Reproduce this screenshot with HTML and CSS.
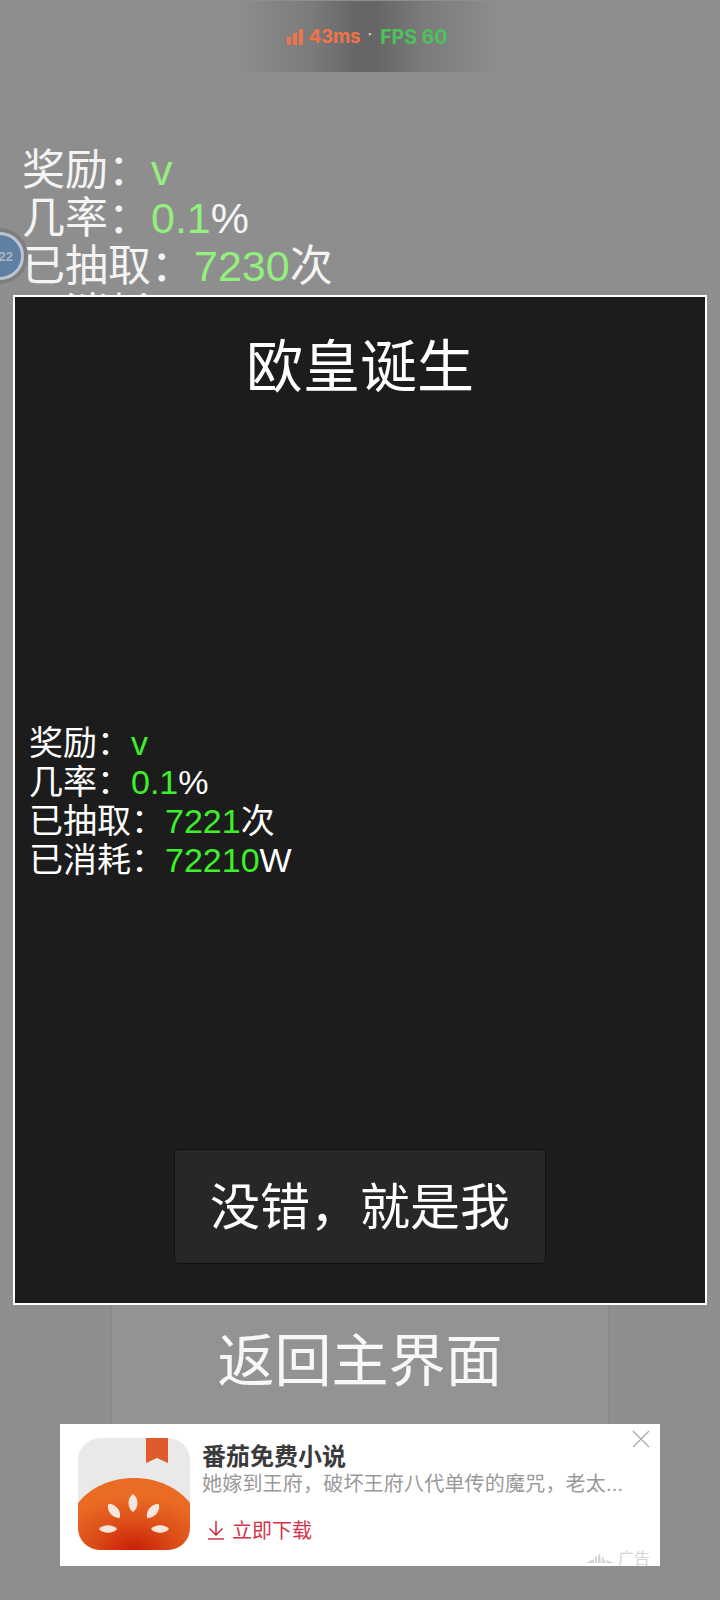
FILE: index.html
```html
<!DOCTYPE html>
<html lang="zh-CN">
<head>
    <meta charset="UTF-8">
    <meta name="viewport" content="width=device-width, initial-scale=1.0">
    <title>欧皇诞生</title>
    <link rel="stylesheet" href="styles.css">
</head>
<body>
    <div class="netBar">
        <svg class="netIcon" width="17" height="17" viewBox="0 0 17 17"><rect x="0" y="9" width="4" height="8"/><rect x="6" y="5" width="4" height="12"/><rect x="12" y="1" width="4" height="16"/></svg>
        <span class="ping">43ms</span>
        <span class="dot">·</span>
        <span class="fps">FPS 60</span>
    </div>

    <main class="page">
        <div class="stats stats-back">
            <div>奖励：<em>v</em></div>
            <div>几率：<em>0.1</em>%</div>
            <div>已抽取：<em>7230</em>次</div>
            <div>已消耗：<em>72300</em>W</div>
        </div>
        <div class="backBtn">返回主界面</div>
    </main>

    <div class="floatBall"><span>22</span></div>

    <section class="dialog">
        <h1>欧皇诞生</h1>
        <div class="stats stats-front">
            <div>奖励：<em>v</em></div>
            <div>几率：<em>0.1</em>%</div>
            <div>已抽取：<em>7221</em>次</div>
            <div>已消耗：<em>72210</em>W</div>
        </div>
        <button class="okBtn">没错，就是我</button>
    </section>

    <aside class="ad">
        <svg class="adIcon" width="112" height="112" viewBox="0 0 112 112">
            <defs>
                <radialGradient id="tomato" cx="50%" cy="100%" r="75%">
                    <stop offset="0" stop-color="#c91d08"/>
                    <stop offset="0.5" stop-color="#dc4c17"/>
                    <stop offset="1" stop-color="#ea6b24"/>
                </radialGradient>
                <path id="seed" d="M-9 0C-5 -6 5 -6 9 0C5 6 -5 6 -9 0Z"/>
                <path id="seedFlat" d="M-9 0C-5 -5 5 -5 9 0C5 5 -5 5 -9 0Z"/>
            </defs>
            <rect width="112" height="112" rx="22" fill="#e9e9e9"/>
            <path d="M0 65C12 50 32 40 56 40S100 50 112 65V90A22 22 0 0 1 90 112H22A22 22 0 0 1 0 90Z" fill="url(#tomato)"/>
            <path d="M68 0H90V25L79 20L68 25Z" fill="#e05a2d"/>
            <g fill="#f7e6dc">
                <use href="#seed" transform="translate(55 65) rotate(90)"/>
                <use href="#seed" transform="translate(36 73) rotate(50)"/>
                <use href="#seed" transform="translate(75 73) rotate(-50)"/>
                <use href="#seedFlat" transform="translate(30 91)"/>
                <use href="#seedFlat" transform="translate(82 91)"/>
            </g>
        </svg>
        <div class="adBody">
            <div class="adTitle">番茄免费小说</div>
            <div class="adDesc">她嫁到王府，破坏王府八代单传的魔咒，老太...</div>
            <div class="adLink">
                <svg width="18" height="20" viewBox="0 0 18 20" fill="none" stroke="#d2344a" stroke-width="1.6"><path d="M9 1V15M2.5 8.5L9 15L15.5 8.5M1 19H17"/></svg>
                <span>立即下载</span>
            </div>
        </div>
        <svg class="adClose" width="18" height="18" viewBox="0 0 18 18" stroke="#a9a9a9" stroke-width="1.2"><path d="M1 1L17 17M17 1L1 17"/></svg>
        <div class="adMark">
            <svg width="28" height="10" viewBox="0 0 28 10" fill="#d4d4d4"><path d="M0 9L8 5V9ZM9 9V3L11 2V9ZM12 9V1L14 0L15 9ZM16 9V2L20 9ZM20 6L28 9H21Z"/></svg>
            <span>广告</span>
        </div>
    </aside>
</body>
</html>
```

FILE: styles.css
```css
* {
    box-sizing: border-box;
}
body {
    margin: 0;
    width: 720px;
    height: 1600px;
    overflow: hidden;
    position: relative;
    background-color: #8e8e8e;
    color: #fff;
    font-family: "Liberation Sans", "Noto Sans CJK SC", sans-serif;
}
em {
    font-style: normal;
}
.page {
    display: flex;
    flex-direction: column;
    align-items: center;
    height: 1600px;
    padding: 146px 0 0;
}
.stats {
    align-self: flex-start;
}
.stats-back {
    margin-left: 22px;
    font-size: 43px;
    line-height: 48px;
    height: 1154px;
    color: #f4f4f4;
}
.stats-back em {
    color: #93f07f;
}
.backBtn {
    width: 498px;
    height: 130px;
    padding-top: 27px;
    background-color: #939393;
    border-left: 1px solid #888;
    border-right: 1px solid #888;
    font-size: 57px;
    line-height: 68px;
    text-align: center;
    color: #f8f8f8;
}
.netBar {
    position: absolute;
    top: 1px;
    left: 232px;
    width: 270px;
    height: 71px;
    display: flex;
    align-items: center;
    justify-content: center;
    gap: 5px;
    background: linear-gradient(90deg, #8e8e8e 0%, #7a7a7a 30%, #666 46%, #666 54%, #7a7a7a 70%, #8e8e8e 100%);
    font-family: Inter, "Noto Sans", sans-serif;
    font-size: 19.5px;
    font-weight: 700;
}
.netIcon {
    fill: #f0734a;
}
.ping {
    color: #f0734a;
    font-size: 19px;
    letter-spacing: -0.3px;
}
.dot {
    color: #ccc;
    font-size: 14px;
    margin: 0 3px 6px 2px;
}
.fps {
    color: #4cc35a;
}
.floatBall {
    position: absolute;
    left: -24px;
    top: 232px;
    width: 48px;
    height: 48px;
    border-radius: 50%;
    background-color: #5f7fa3;
    border: 3px solid #bcc6d0;
    box-shadow: 0 0 0 4px #7e7e7e;
    display: flex;
    align-items: center;
    justify-content: flex-end;
    padding-right: 8px;
    font-size: 13px;
    font-weight: bold;
    color: #aab4be;
}
.dialog {
    position: absolute;
    left: 13px;
    top: 295px;
    width: 694px;
    height: 1010px;
    background-color: #1c1c1c;
    border: 2px solid #fff;
    display: flex;
    flex-direction: column;
    align-items: center;
}
.dialog h1 {
    margin: 34px 0 0;
    font-size: 57px;
    line-height: 72px;
    font-weight: normal;
}
.stats-front {
    margin: 321px 0 0 14px;
    font-size: 34px;
    line-height: 39px;
}
.stats-front em {
    color: #3ef02a;
}
.okBtn {
    margin-top: 269px;
    width: 372px;
    height: 115px;
    padding: 0 0 7px;
    background-color: #272727;
    border: 1px solid #111;
    border-radius: 5px;
    color: #fff;
    font-family: inherit;
    font-size: 50px;
}
.ad {
    position: absolute;
    left: 60px;
    top: 1424px;
    width: 600px;
    height: 142px;
    background-color: #fff;
    display: flex;
    padding: 14px 18px;
    gap: 12px;
}
.adBody {
    display: flex;
    flex-direction: column;
    padding-top: 4px;
}
.adTitle {
    font-size: 24px;
    line-height: 30px;
    font-weight: bold;
    color: #3a3a3a;
}
.adDesc {
    font-size: 20px;
    line-height: 25px;
    letter-spacing: 0.2px;
    color: #999;
}
.adLink {
    display: flex;
    align-items: center;
    gap: 7px;
    margin: 18px 0 0 5px;
    color: #d2344a;
    font-size: 20px;
}
.adClose {
    position: absolute;
    right: 10px;
    top: 6px;
}
.adMark {
    position: absolute;
    right: 10px;
    bottom: -3px;
    display: flex;
    align-items: center;
    gap: 4px;
    font-size: 16px;
    line-height: 20px;
    color: #d4d4d4;
}
```
